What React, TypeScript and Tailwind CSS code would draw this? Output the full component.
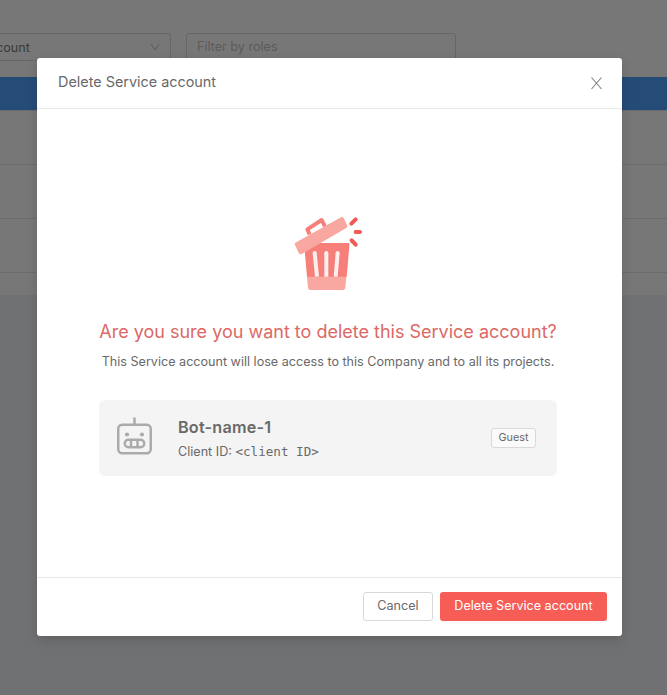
import React from 'react';

function TrashIllustration() {
  return (
    <svg className="ml-[2px] block h-[76px] w-[70px]" viewBox="27 33 210 228" fill="none">
      <path d="M57 114H190Q194 114 193.500 118L185 216H66Z" fill="#f77f7a" />
      <path d="M66 215H184L181 249Q180 255 174 255H76Q70 255 69 249Z" fill="#f9a8a1" />
      <path d="M89 144L96 215M124 144V215M158 144L152 215" stroke="#fdeeee" strokeWidth="12" />
      <path d="M89 144v1M124 144v1M158 144v1" stroke="#fdeeee" strokeWidth="12" strokeLinecap="round" />
      <path d="M74 88L67 73L110 45L120 64" stroke="#f77f7a" strokeWidth="12" strokeLinejoin="round" />
      <path d="M31 113L168 37Q173 34 176 39L186 60Q189 66 184 69L50 147Q45 150 41 144L30 120Q28 116 31 113Z" fill="#f9a8a1" />
      <path d="M199 56L212 43M212 81H225M200 106L212 119" stroke="#f25a55" strokeWidth="12" strokeLinecap="round" />
    </svg>
  );
}

function RobotIcon() {
  return (
    <svg className="block h-[38px] w-9" viewBox="0 0 36 38" fill="none" stroke="#ababab" strokeWidth="2.500">
      <path d="M18.500 0.500V8" />
      <rect x="2.250" y="7.750" width="32.500" height="28.500" rx="4" />
      <rect x="8.750" y="22.750" width="19.500" height="7.500" rx="3.750" />
      <path d="M15 23V30M21.500 23V30" />
      <circle cx="11" cy="17.500" r="2.100" fill="#ababab" stroke="none" />
      <circle cx="26" cy="17.500" r="2.100" fill="#ababab" stroke="none" />
    </svg>
  );
}

function Page() {
  return (
    <div className="h-full bg-[#707173]">
      <div className="h-[295px] bg-[#777777]">
        <div className="flex h-[77px] gap-[15px] pt-[33px] text-[12.6px]">
          <div className="flex h-7 w-[171px] items-center justify-between rounded-r-[3px] border border-l-0 border-[#676767] pr-2.5 text-[#3a3a3a]">
            <span className="-ml-[4px] pt-0.5">count</span>
            <svg className="h-2.5 w-2.5" viewBox="0 0 10 10" fill="none" stroke="#5b5b5b"><path d="M1 2L5 8L9 2" /></svg>
          </div>
          <div className="flex h-7 w-[270px] items-center rounded-[3px] border border-[#676767] px-2.5 text-[#5b5b5b]">Filter by roles</div>
        </div>
        <div className="h-[34px] border-b border-[#6c6c6c] bg-[#254c77]" />
        <div className="h-[54px] border-b border-[#6c6c6c]" />
        <div className="h-[54px] border-b border-[#6c6c6c]" />
        <div className="h-[54px] border-b border-[#6c6c6c]" />
      </div>
    </div>
  );
}

export default function App() {
  return (
    <div className="relative h-[695px] w-[667px] overflow-hidden font-['Inter',sans-serif] text-[#696969]">
      <Page />
      <div role="dialog" className="absolute top-[58px] left-[37px] flex h-[578px] w-[585px] flex-col rounded-[3px] bg-white shadow-[0_4px_12px_rgba(0,0,0,0.15)]">
        <header className="flex h-[51px] items-center justify-between border-b border-[#e8e8e8] pr-[19px] pl-[21px]">
          <h1 className="pb-[3px] text-[14.4px] leading-5">Delete Service account</h1>
          <svg className="h-[13px] w-[13px]" viewBox="0 0 13 13" fill="none" stroke="#808080" strokeWidth="1.100"><path d="M1.500 0.500L11.500 12M11.500 0.500L1.500 12" /></svg>
        </header>
        <main className="flex h-[468px] flex-col items-center pt-[107px] pr-[3px]">
          <TrashIllustration />
          <h2 className="mt-[26px] text-[18px] leading-7 whitespace-nowrap text-[#dc6965]">Are you sure you want to delete this Service account?</h2>
          <p className="mt-[6px] text-[12.6px] leading-5 whitespace-nowrap">This Service account will lose access to this Company and to all its projects.</p>
          <section className="mt-7 flex h-[76px] w-[458px] items-center rounded-md bg-[#f4f4f4] pr-[21px] pl-[17px]">
            <div className="pb-1"><RobotIcon /></div>
            <div className="ml-[26px] flex-1 pt-0.5">
              <h3 className="text-[16.2px] leading-6 font-semibold tracking-[0.2px]">Bot-name-1</h3>
              <p className="text-[12.6px] leading-[25px]">Client ID: <code className="font-['DejaVu_Sans_Mono',monospace] text-[12.6px]">&lt;client ID&gt;</code></p>
            </div>
            <span className="flex h-5 w-[45px] items-center justify-center rounded-[3px] border border-[#d9d9d9] bg-[#fafafa] text-[10.8px] leading-[18px]">Guest</span>
          </section>
        </main>
        <footer className="flex h-[59px] items-center justify-end gap-[7px] border-t border-[#e8e8e8] pr-[15px] pb-px text-[12.6px]">
          <button className="h-[29px] w-[70px] rounded-[3px] border border-[#d9d9d9] bg-white">Cancel</button>
          <button className="h-[29px] w-[167px] rounded-[3px] bg-[#f55d56] text-white shadow-[0_2px_0_rgba(0,0,0,0.02)]">Delete Service account</button>
        </footer>
      </div>
    </div>
  );
}
